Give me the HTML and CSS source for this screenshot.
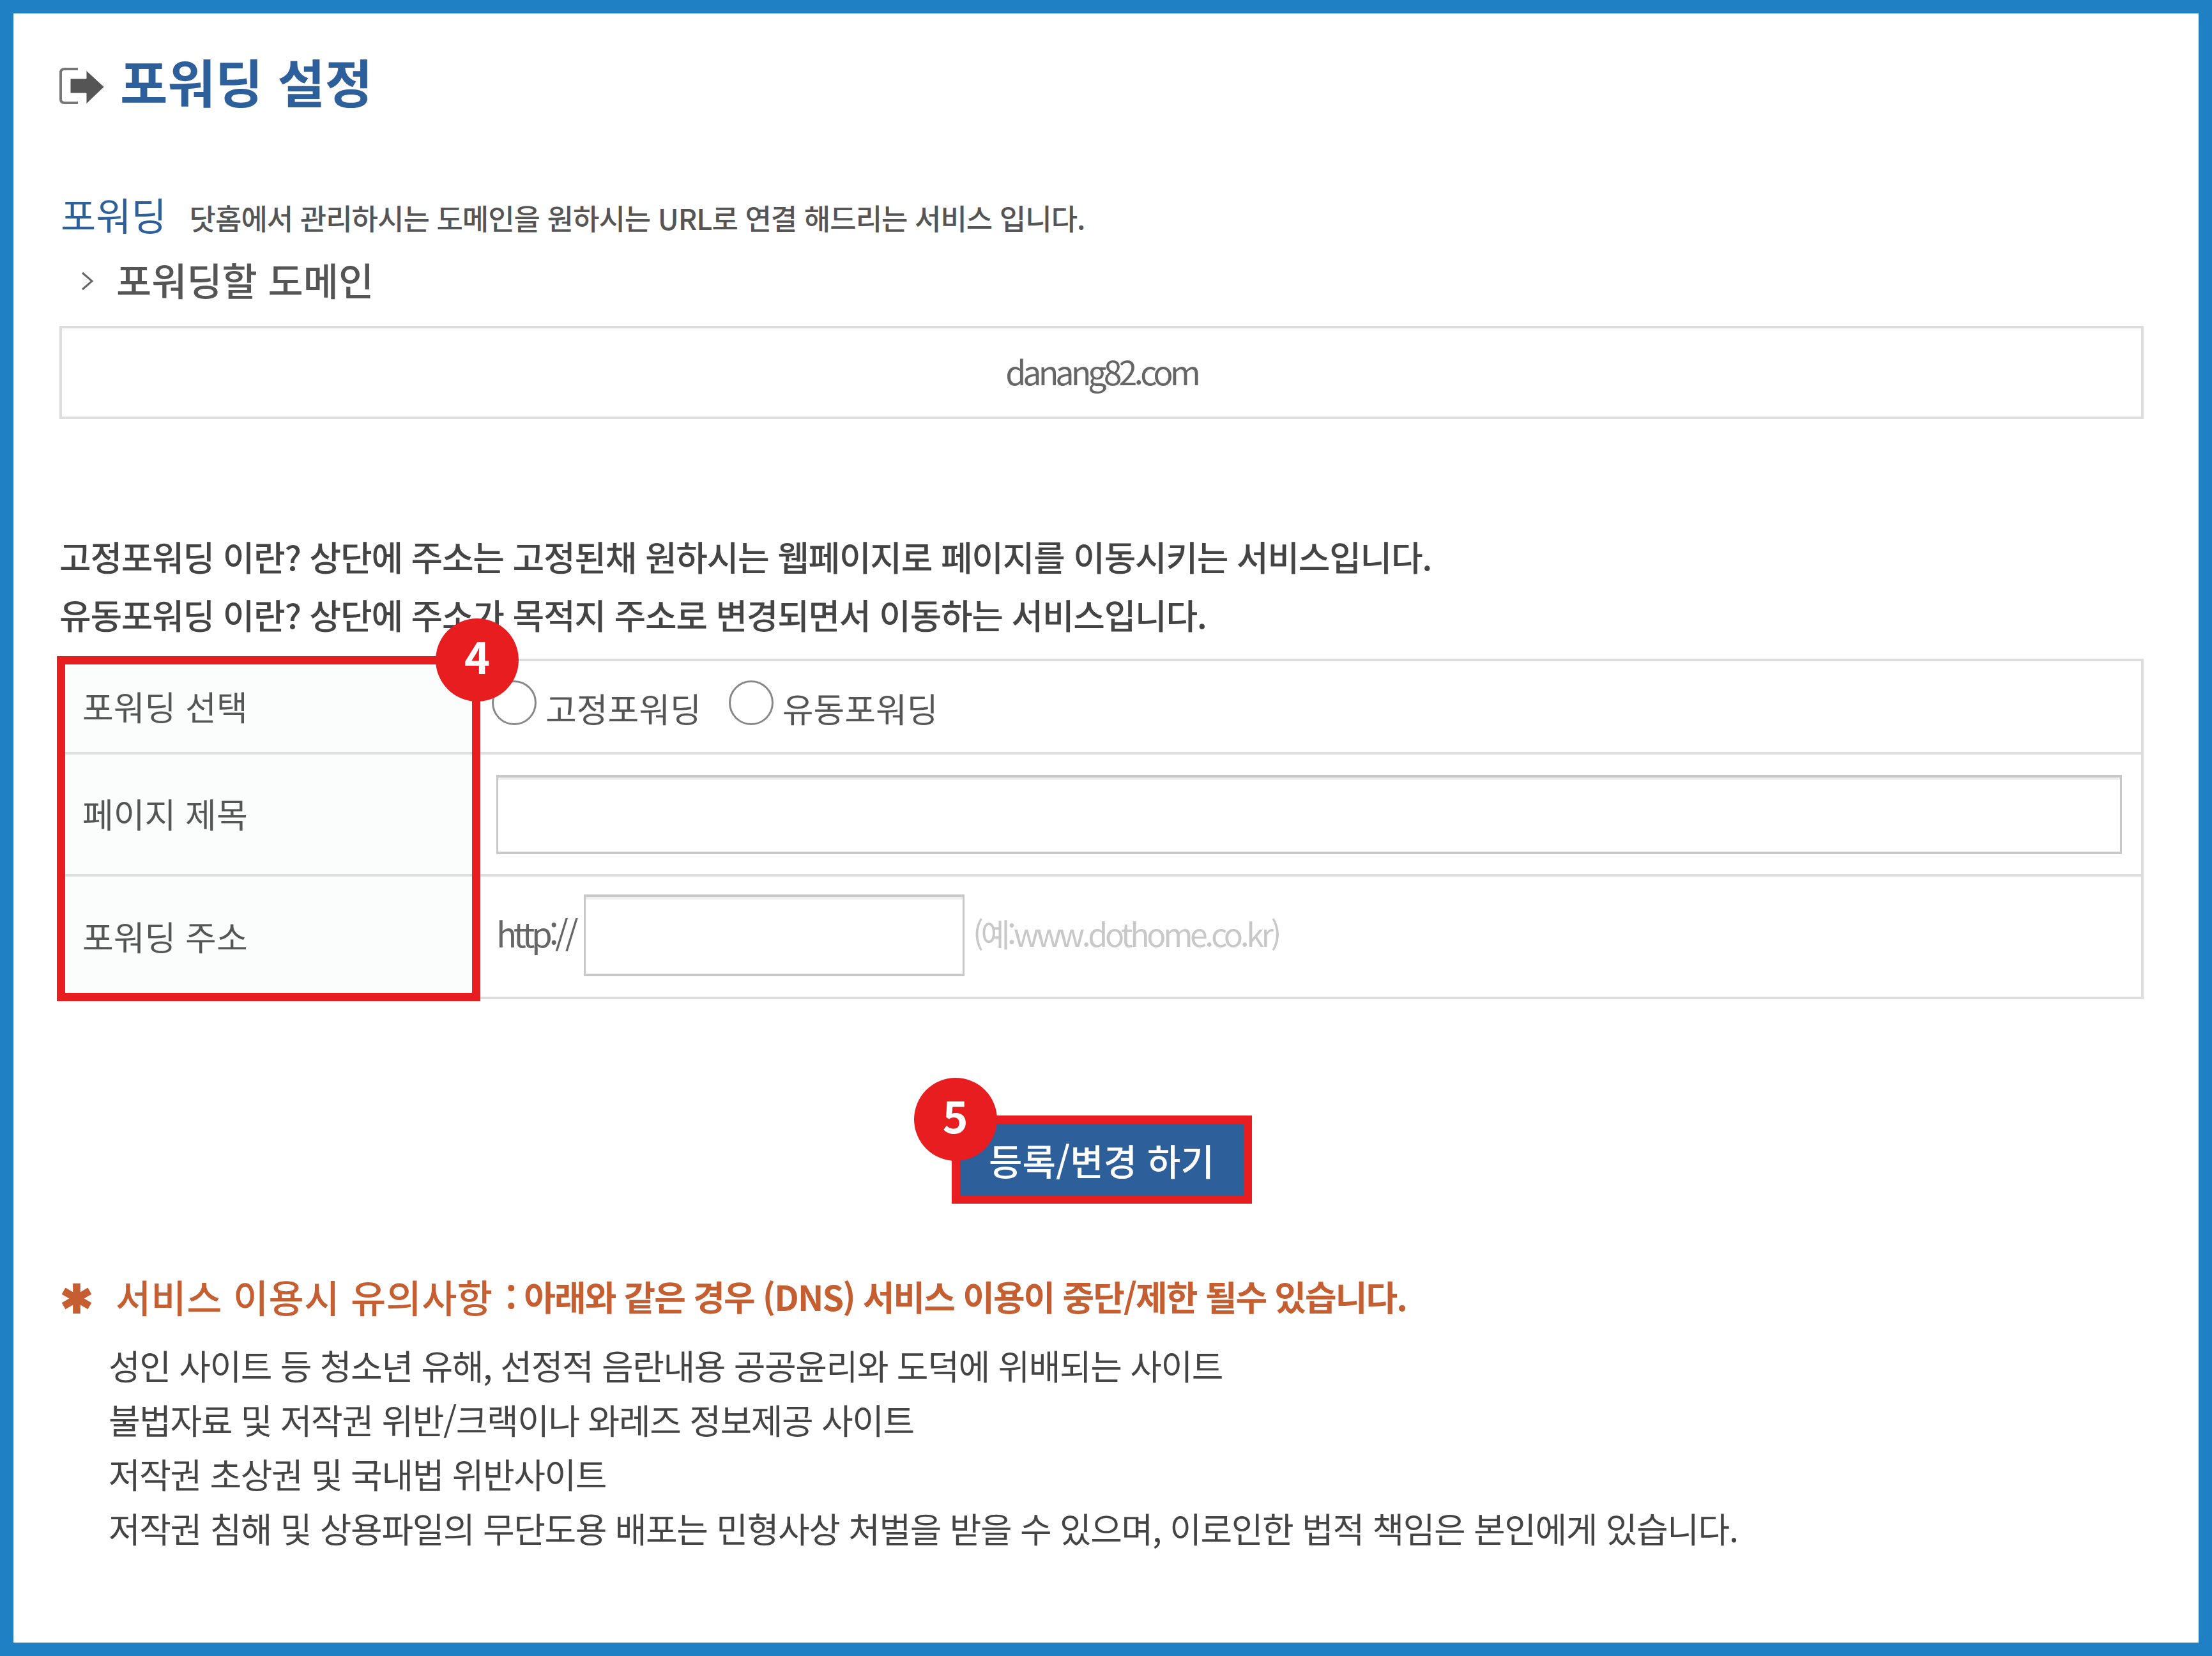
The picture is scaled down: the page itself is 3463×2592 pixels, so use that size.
FILE: index.html
```html
<!DOCTYPE html>
<html lang="ko">
<head>
    <meta charset="UTF-8">
    <title>포워딩 설정</title>
    <link rel="stylesheet" href="styles.css">
</head>
<body>
    <div class="page">
        <h1 class="title">
            <svg class="title-icon" viewBox="0 0 70 58">
                <path d="M29 2H8Q2 2 2 8V49Q2 55 8 55H29" fill="none" stroke="#777" stroke-width="4"/>
                <path d="M17 17H42V4L70 30L42 57V40H17Z" fill="#555" stroke="#fff" stroke-width="1"/>
            </svg>
            <span>포워딩 설정</span>
        </h1>

        <div class="intro">
            <span class="intro-name">포워딩</span>
            <span class="intro-desc">닷홈에서 관리하시는 도메인을 원하시는 URL로 연결 해드리는 서비스 입니다.</span>
        </div>

        <h2 class="sub-title">
            <svg class="chevron" viewBox="0 0 20 30">
                <path d="M2 2L17 15L2 28" fill="none" stroke="#666" stroke-width="3"/>
            </svg>
            포워딩할 도메인
        </h2>
        <div class="domain-box">danang82.com</div>

        <div class="notes">
            <p>고정포워딩 이란? 상단에 주소는 고정된채 원하시는 웹페이지로 페이지를 이동시키는 서비스입니다.</p>
            <p>유동포워딩 이란? 상단에 주소가 목적지 주소로 변경되면서 이동하는 서비스입니다.</p>
        </div>

        <div class="form-table">
            <div class="row row-radio">
                <div class="label">포워딩 선택</div>
                <div class="field">
                    <label class="radio"><span class="radio-dot"></span>고정포워딩</label>
                    <label class="radio"><span class="radio-dot"></span>유동포워딩</label>
                </div>
            </div>
            <div class="row row-title">
                <div class="label">페이지 제목</div>
                <div class="field"><input class="input input-wide" type="text"></div>
            </div>
            <div class="row row-url">
                <div class="label">포워딩 주소</div>
                <div class="field">
                    <span class="http">http://</span>
                    <input class="input input-url" type="text">
                    <span class="hint">(예:www.dothome.co.kr)</span>
                </div>
            </div>
            <div class="highlight"></div>
            <div class="badge badge-4">4</div>
        </div>

        <div class="submit-wrap">
            <button class="submit" type="button">
                등록/변경 하기
                <span class="badge badge-5">5</span>
            </button>
        </div>

        <div class="warn-title">
            <span class="warn-star">✱</span>
            <span class="warn-lead">서비스 이용시 유의사항</span>
            <span class="warn-rest">: 아래와 같은 경우 (DNS) 서비스 이용이 중단/제한 될수 있습니다.</span>
        </div>
        <ul class="warn-list">
            <li>성인 사이트 등 청소년 유해, 선정적 음란내용 공공윤리와 도덕에 위배되는 사이트</li>
            <li>불법자료 및 저작권 위반/크랙이나 와레즈 정보제공 사이트</li>
            <li>저작권 초상권 및 국내법 위반사이트</li>
            <li>저작권 침해 및 상용파일의 무단도용 배포는 민형사상 처벌을 받을 수 있으며, 이로인한 법적 책임은 본인에게 있습니다.</li>
        </ul>
    </div>
</body>
</html>
```

FILE: styles.css
```css
* {
    box-sizing: border-box;
}
body {
    margin: 0;
    font-family: "Noto Sans CJK KR", "Noto Sans", sans-serif;
    color: #555;
    background-color: #fff;
}
.page {
    width: 3463px;
    height: 2592px;
    border: 21px solid #2080c4;
    padding: 65px 86px 0 72px;
    overflow: hidden;
}
.title {
    display: flex;
    align-items: center;
    height: 80px;
    margin: 0;
    font-size: 81px;
    font-weight: 700;
    line-height: 80px;
    color: #2d5f9b;
}
.title-icon {
    flex: none;
    width: 70px;
    height: 58px;
    margin: 18px 25px 0 0;
}
.intro {
    display: flex;
    align-items: center;
    height: 60px;
    margin-top: 141px;
}
.intro-name {
    font-size: 60px;
    line-height: 60px;
    color: #2d5f9b;
    margin: -4px 36px 0 2px;
}
.intro-desc {
    font-size: 45px;
    font-weight: 500;
    letter-spacing: -1px;
    line-height: 60px;
    margin-top: 8px;
}
.sub-title {
    display: flex;
    align-items: center;
    height: 60px;
    margin: 40px 0 0;
    font-size: 60px;
    font-weight: 500;
    line-height: 60px;
    color: #555;
}
.chevron {
    width: 20px;
    height: 30px;
    margin: 6px 35px 0 34px;
}
.domain-box {
    height: 146px;
    margin-top: 43px;
    border: 4px solid #ddd;
    font-size: 52px;
    letter-spacing: -5px;
    line-height: 134px;
    text-align: center;
    color: #666;
}
.notes {
    margin-top: 169px;
}
.notes p {
    margin: 0;
    font-size: 54px;
    font-weight: 500;
    letter-spacing: -1.3px;
    line-height: 91px;
    color: #444;
}
.form-table {
    position: relative;
    margin-top: 24px;
    border: 4px solid #ddd;
}
.row {
    display: flex;
    border-top: 4px solid #ddd;
}
.row:first-child {
    border-top: 0;
}
.row-radio {
    height: 142px;
}
.row-title {
    height: 191px;
}
.row-url {
    height: 192px;
}
.label {
    display: flex;
    align-items: center;
    width: 648px;
    padding: 0 0 3px 32px;
    background-color: #fbfdfc;
    font-size: 53px;
    line-height: 60px;
}
.field {
    flex: 1;
    display: flex;
    align-items: center;
    padding-left: 32px;
    font-size: 53px;
}
.radio {
    display: flex;
    align-items: center;
    margin-right: 43px;
    padding-top: 4px;
}
.radio:first-child {
    margin-left: -7px;
}
.radio-dot {
    width: 70px;
    height: 70px;
    margin: 0 14px 16px 0;
    border: 3px solid #888;
    border-radius: 50%;
    background-color: #fff;
}
.input {
    height: 124px;
    border: solid #c8c8c8;
    border-width: 4px 3px;
    background-color: #fff;
    box-shadow: inset 0 4px 0 #f0f0f0;
    outline: 0;
}
.input-wide {
    width: 2545px;
}
.input-url {
    width: 596px;
    height: 128px;
    margin: 0 13px 4px 0;
}
.http {
    flex: none;
    width: 137px;
    margin-bottom: 12px;
    letter-spacing: -5.3px;
    color: #666;
}
.hint {
    margin-bottom: 12px;
    font-size: 50px;
    letter-spacing: -4.4px;
    color: #c8c8c8;
}
.highlight {
    position: absolute;
    left: -8px;
    top: -8px;
    width: 663px;
    height: 540px;
    border: 13px solid #e71d1f;
}
.badge {
    position: absolute;
    display: flex;
    align-items: center;
    justify-content: center;
    width: 130px;
    height: 130px;
    padding-bottom: 14px;
    border-radius: 50%;
    background-color: #e71d1f;
    font-size: 68px;
    font-weight: 700;
    line-height: 1;
    color: #fff;
}
.badge-4 {
    left: 585px;
    top: -67px;
}
.badge-5 {
    left: -72px;
    top: -72px;
}
.submit-wrap {
    display: flex;
    justify-content: center;
    margin-top: 182px;
}
.submit {
    position: relative;
    width: 470px;
    height: 138px;
    padding: 0 0 2px;
    border: 13px solid #e71d1f;
    border-bottom-width: 12px;
    background-color: #2d5f9b;
    font-family: inherit;
    font-size: 57px;
    font-weight: 500;
    color: #fff;
}
.warn-title {
    display: flex;
    align-items: center;
    height: 60px;
    margin-top: 114px;
    color: #c55f32;
}
.warn-star {
    width: 88px;
    padding-left: 1px;
    font-size: 62px;
    font-weight: 700;
    line-height: 60px;
}
.warn-lead {
    font-size: 60px;
    font-weight: 500;
    letter-spacing: 0.4px;
    margin-right: 20px;
}
.warn-rest {
    font-size: 54px;
    font-weight: 700;
    letter-spacing: -1.95px;
}
.warn-list {
    margin: 36px 0 0;
    padding: 0 0 0 77px;
    list-style: none;
}
.warn-list li {
    font-size: 54px;
    letter-spacing: -1.4px;
    line-height: 85px;
    color: #444;
}
```
